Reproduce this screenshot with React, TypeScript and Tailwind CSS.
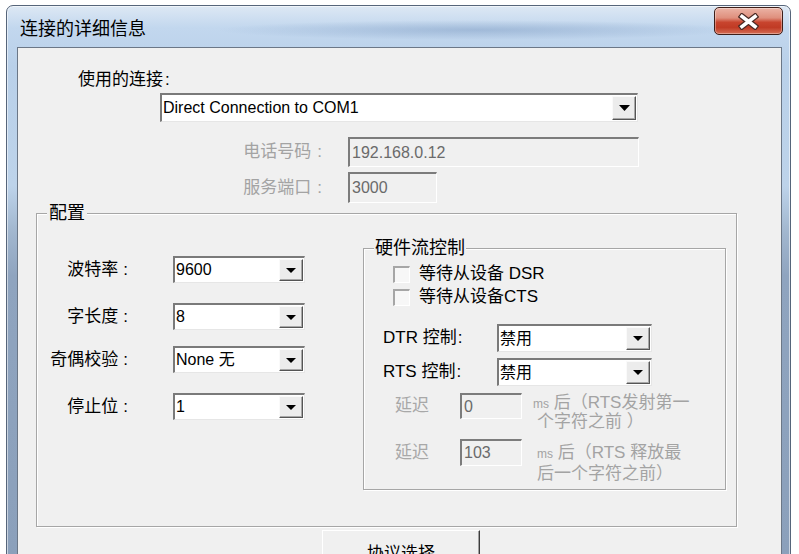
import React from "react";

function Arrow({ w = 10, h = 5 }: { w?: number; h?: number }) {
  return (
    <svg width={w} height={h} viewBox={`0 0 ${w} ${h}`}>
      <path d={`M0 0H${w}L${w / 2} ${h}Z`} fill="#000" />
    </svg>
  );
}

function Combo({
  cls,
  text,
  big = false,
}: {
  cls: string;
  text: React.ReactNode;
  big?: boolean;
}) {
  return (
    <div
      className={`flex shrink-0 border-t-2 border-l-2 border-r border-b border-t-[#7a7a7a] border-l-[#7a7a7a] border-r-[#e6e6e6] border-b-[#e6e6e6] bg-white ${cls}`}
    >
      <div className="flex-1 flex items-center pl-[1px] text-[16px] leading-[20px] text-black whitespace-nowrap overflow-hidden">
        {text}
      </div>
      <div className="w-[24px] my-[1px] mr-[1px] flex items-center justify-center bg-[#ececec] border border-t-[#fafafa] border-l-[#fafafa] border-r-[#555555] border-b-[#555555] shadow-[inset_-1px_-1px_0_#a8a8a8]">
        {big ? <Arrow w={11} h={6} /> : <Arrow w={10} h={5} />}
      </div>
    </div>
  );
}

function Field({ cls, text }: { cls: string; text: string }) {
  return (
    <div
      className={`flex items-center shrink-0 pl-[2px] border-t-2 border-l-2 border-r border-b border-t-[#7c7c7c] border-l-[#7c7c7c] border-r-white border-b-white bg-[#f0f0f0] text-[16px] leading-[20px] text-[#6a6a6a] ${cls}`}
    >
      {text}
    </div>
  );
}

function Check({ label }: { label: React.ReactNode }) {
  return (
    <div className="flex items-center h-[18px]">
      <div className="w-[17px] h-[17px] shrink-0 border-t-2 border-l-2 border-r border-b border-t-[#a6a6a6] border-l-[#a6a6a6] border-r-white border-b-white bg-[#f7f7f7]" />
      <span className="ml-[9px] text-[17px] leading-[20px] text-black whitespace-nowrap">
        {label}
      </span>
    </div>
  );
}

export default function App() {
  return (
    <div className="w-[799px] h-[554px] bg-white overflow-hidden font-['Liberation_Sans','Noto_Sans_CJK_SC',sans-serif]">
      <div className="relative ml-[6px] mt-[5px] w-[785px] h-[620px] rounded-t-[7px] border border-[#56657a] shadow-[inset_0_0_0_1px_rgba(255,255,255,0.55)] bg-[linear-gradient(180deg,#dde8f4_0px,#c2d7ee_22px,#b9d0e9_60px,#bdd3ea_180px,#a2b7cf_225px,#8fa4bf_270px,#8a9fba_620px)] flex flex-col">
        {/* title bar */}
        <div className="h-[41px] shrink-0 flex items-center pt-[4px] pl-[13px] bg-[radial-gradient(ellipse_260px_10px_at_470px_24px,rgba(120,150,190,0.45),transparent)]">
          <span className="text-[18px] leading-[22px] text-black">连接的详细信息</span>
        </div>

        {/* close button */}
        <div className="absolute top-[1px] right-[7px] w-[69px] h-[28px] rounded-[5px] border border-[#3e1e18] bg-[linear-gradient(180deg,#ebb3a5_0%,#df8f7d_38%,#c8442e_55%,#c03b25_75%,#d56e55_100%)] shadow-[inset_0_0_0_1px_rgba(255,255,255,0.35)] flex items-center justify-center">
          <svg width="21" height="17" viewBox="0 0 21 17">
            <path d="M4 3.5L17 13.5M17 3.5L4 13.5" stroke="#4a2a24" strokeWidth="6" strokeLinecap="square" />
            <path d="M4 3.5L17 13.5M17 3.5L4 13.5" stroke="#ffffff" strokeWidth="3.6" strokeLinecap="square" />
          </svg>
        </div>

        {/* client area */}
        <div className="ml-[10px] mr-[8px] flex-1 border border-[#6b7787] bg-[#f0f0f0] flex flex-col">
          <div className="mt-[22px] ml-[60px] h-[20px] text-[17px] leading-[20px] text-black">
            使用的连接<span className="ml-[2px]">:</span>
          </div>

          <div className="mt-[3px] ml-[142px]">
            <Combo cls="w-[478px] h-[29px]" text="Direct Connection to COM1" big />
          </div>

          <div className="mt-[15px] flex items-center h-[30px]">
            <div className="w-[304px] text-right text-[17px] leading-[20px] text-[#a3a3a3]">
              电话号码<span className="ml-[6px]">:</span>
            </div>
            <Field cls="ml-[26px] w-[291px] h-[30px]" text="192.168.0.12" />
          </div>

          <div className="mt-[5px] flex items-center h-[31px]">
            <div className="w-[304px] text-right text-[17px] leading-[20px] text-[#a3a3a3]">
              服务端口<span className="ml-[6px]">:</span>
            </div>
            <Field cls="ml-[26px] w-[89px] h-[31px]" text="3000" />
          </div>

          {/* 配置 group */}
          <div className="relative mt-[10px] ml-[18px] w-[701px] h-[314px] shrink-0 border border-[#a6a6a6] shadow-[inset_1px_1px_0_#ffffff,1px_1px_0_#ffffff] flex">
            <div className="absolute left-[10px] top-[-12px] px-[2px] bg-[#f0f0f0] text-[18px] leading-[22px] text-black">
              配置
            </div>

            {/* left column */}
            <div className="w-[326px] shrink-0 flex flex-col">
              <div className="mt-[42px] flex items-center h-[27px]">
                <div className="w-[91px] text-right text-[17px] leading-[20px] text-black">
                  波特率<span className="ml-[5px]">:</span>
                </div>
                <div className="ml-[45px]">
                  <Combo cls="w-[132px] h-[27px]" text="9600" />
                </div>
              </div>
              <div className="mt-[20px] flex items-center h-[27px]">
                <div className="w-[91px] text-right text-[17px] leading-[20px] text-black">
                  字长度<span className="ml-[5px]">:</span>
                </div>
                <div className="ml-[45px]">
                  <Combo cls="w-[132px] h-[27px]" text="8" />
                </div>
              </div>
              <div className="mt-[16px] flex items-center h-[27px]">
                <div className="w-[91px] text-right text-[17px] leading-[20px] text-black whitespace-nowrap">
                  奇偶校验<span className="ml-[5px]">:</span>
                </div>
                <div className="ml-[45px]">
                  <Combo cls="w-[132px] h-[27px]" text="None 无" />
                </div>
              </div>
              <div className="mt-[20px] flex items-center h-[27px]">
                <div className="w-[91px] text-right text-[17px] leading-[20px] text-black">
                  停止位<span className="ml-[5px]">:</span>
                </div>
                <div className="ml-[45px]">
                  <Combo cls="w-[132px] h-[27px]" text="1" />
                </div>
              </div>
            </div>

            {/* hardware flow control group */}
            <div className="relative mt-[34px] w-[363px] h-[242px] shrink-0 border border-[#a6a6a6] shadow-[inset_1px_1px_0_#ffffff,1px_1px_0_#ffffff] flex flex-col">
              <div className="absolute left-[10px] top-[-12px] px-[1px] bg-[#f0f0f0] text-[18px] leading-[22px] text-black whitespace-nowrap">
                硬件流控制
              </div>

              <div className="mt-[16px] ml-[29px]">
                <Check label="等待从设备 DSR" />
              </div>
              <div className="mt-[5px] ml-[29px]">
                <Check label="等待从设备CTS" />
              </div>

              <div className="mt-[18px] ml-[19px] flex items-center h-[28px]">
                <div className="w-[114px] text-[17px] leading-[20px] text-black whitespace-nowrap">
                  DTR 控制<span className="ml-[1px]">:</span>
                </div>
                <Combo cls="w-[155px] h-[28px]" text="禁用" />
              </div>
              <div className="mt-[6px] ml-[19px] flex items-center h-[28px]">
                <div className="w-[114px] text-[17px] leading-[20px] text-black whitespace-nowrap">
                  RTS 控制<span className="ml-[1px]">:</span>
                </div>
                <Combo cls="w-[155px] h-[28px]" text="禁用" />
              </div>

              <div className="mt-[7px] ml-[31px] flex items-start h-[46px]">
                <div className="w-[65px] pt-[3px] text-[17px] leading-[20px] text-[#a8a8a8]">延迟</div>
                <Field cls="w-[62px] h-[26px]" text="0" />
                <div className="ml-[11px] pt-[1px] text-[17px] leading-[18px] text-[#a3a3a3] whitespace-nowrap">
                  <span className="text-[12px]">ms</span> 后（RTS发射第一
                  <br />
                  <span className="ml-[4px]">个字符之前 ）</span>
                </div>
              </div>
              <div className="ml-[31px] flex items-start h-[46px]">
                <div className="w-[65px] pt-[4px] text-[17px] leading-[20px] text-[#a8a8a8]">延迟</div>
                <Field cls="w-[62px] h-[27px]" text="103" />
                <div className="ml-[15px] pt-[4px] text-[17px] leading-[19px] text-[#a3a3a3] whitespace-nowrap">
                  <span className="text-[12px]">ms</span> 后（RTS 释放最
                  <br />
                  后一个字符之前）
                </div>
              </div>
            </div>
          </div>

          <div className="mt-[3px] ml-[304px] w-[158px] h-[40px] shrink-0 flex justify-center pt-[13px] border border-t-white border-l-white border-r-[#3c3c3c] border-b-[#3c3c3c] shadow-[inset_-1px_-1px_0_#a0a0a0] bg-[#f0f0f0] text-[17px] leading-[20px] text-black">
            协议选择
          </div>
        </div>
      </div>
    </div>
  );
}
